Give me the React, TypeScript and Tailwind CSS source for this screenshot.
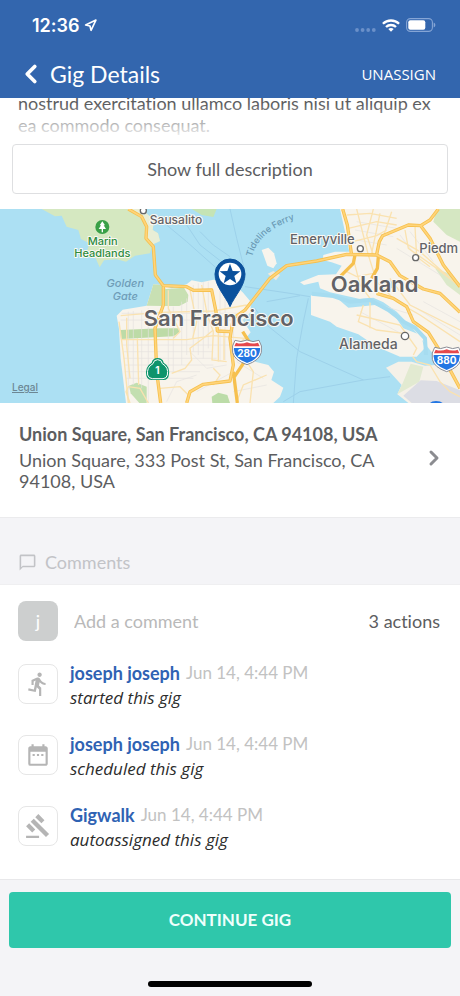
import React from 'react';
import { ChevronLeft, ChevronRight, Navigation } from 'lucide-react';
import { MdChatBubbleOutline, MdDateRange, MdDirectionsRun, MdGavel } from 'react-icons/md';

interface Activity {
  id: number;
  author: string;
  date: string;
  text: string;
  type: 'START' | 'SCHEDULE' | 'ASSIGN';
}

const activities: Activity[] = [
  { id: 1, author: 'joseph joseph', date: 'Jun 14, 4:44 PM', text: 'started this gig', type: 'START' },
  { id: 2, author: 'joseph joseph', date: 'Jun 14, 4:44 PM', text: 'scheduled this gig', type: 'SCHEDULE' },
  { id: 3, author: 'Gigwalk', date: 'Jun 14, 4:44 PM', text: 'autoassigned this gig', type: 'ASSIGN' },
];

const StatusBar: React.FC = () => (
  <div className="flex h-[50px] items-center justify-between pl-8 pr-6">
    <div className="flex items-center gap-1">
      <span className="font-['Inter',sans-serif] text-[18px] font-semibold">12:36</span>
      <Navigation className="h-[13px] w-[13px]" strokeWidth={3} />
    </div>
    <div className="flex items-center gap-1.5">
      <svg className="h-5 w-[21px]" viewBox="0 0 21 20" fill="#6b90c9">
        <circle cx="2" cy="15" r="1.9" />
        <circle cx="7.600" cy="15" r="1.9" />
        <circle cx="13.200" cy="15" r="1.9" />
        <circle cx="18.800" cy="15" r="1.9" />
      </svg>
      <svg className="h-[13px] w-[18px]" viewBox="0 0 18 13" fill="none" stroke="#fff" strokeWidth="2.300">
        <path d="M.9 4.800C5.400.4 12.600.4 17.100 4.800" />
        <path d="M4 8C6.800 5.300 11.200 5.300 14 8" />
        <path d="M9 12.800L6.300 10.100C7.800 8.700 10.200 8.700 11.700 10.100Z" fill="#fff" stroke="none" />
      </svg>
      <svg className="h-[14px] w-[30px]" viewBox="0 0 30 14">
        <rect x=".6" y=".6" width="25.800" height="12.800" rx="3.800" fill="none" stroke="#86a5d5" strokeWidth="1.100" />
        <rect x="2.300" y="2.300" width="17" height="9.400" rx="2" fill="#fff" />
        <path d="M27.700 4.500Q29.400 5.200 29.400 7T27.700 9.500Z" fill="#86a5d5" />
      </svg>
    </div>
  </div>
);

const InterstateShield: React.FC<{ x: number; y: number; label: string }> = ({ x, y, label }) => (
  <g transform={`translate(${x} ${y})`}>
    <path d="M-36-36Q-18-28 0-37Q18-28 36-36Q47-20 43 0Q38 24 0 37Q-38 24-43 0Q-47-20-36-36Z" fill="#fff" stroke="#8a8d96" strokeWidth="3" />
    <path d="M-33-29Q-17-23 0-30Q17-23 33-29L38-18H-38Z" fill="#e5484d" />
    <path d="M-39-13H39Q42 18 0 32Q-42 18-39-13Z" fill="#2276e3" />
    <text y="13" fontSize="30" fontWeight="700" fill="#fff" textAnchor="middle">{label}</text>
  </g>
);

const GigMap: React.FC = () => (
  <svg className="block h-auto w-full font-['Inter',sans-serif]" viewBox="0 12 1380 582" role="img" aria-label="Map of San Francisco">
    <rect y="12" width="1380" height="582" fill="#ace0f3" />

    {/* Marin and Angel Island */}
    <path d="M125 12L165 34L185 32L200 65L235 75L243 102L268 115L262 135L285 155L299 187L312 166L350 163L378 170L405 152L450 145L458 118L480 108L474 85L458 75L462 45L420 12Z" fill="#d5e8c1" />
    <path d="M385 12L430 45L442 100L460 118L480 108L474 85L458 75L462 45L425 12Z" fill="#e9eed6" />
    <path d="M575 12L605 30L640 36L650 12Z" fill="#c5e4b5" />

    {/* San Francisco peninsula */}
    <path d="M350 332L368 314L440 302L460 238L484 240L515 250L560 238L575 226L605 232L640 224L690 228L728 262L752 290L752 322L728 345L752 382L736 402L772 425L765 470L805 480L822 500L814 525L850 548L840 575L820 594H378L362 460L357 372Z" fill="#f8f4ec" />
    <path d="M440 302L460 238L484 240L498 252L552 248L565 270L563 290L538 303H490Z" fill="#c8e0b3" />
    <path d="M360 375L480 370H538V384L520 394L363 402Z" fill="#bddba7" />
    <path d="M387 542L410 533L440 545V594H418L392 565Z" fill="#c2dfb0" />
    <path d="M635 575L655 563L682 570L690 594H637Z" fill="#bcdca8" />

    {/* East Bay */}
    <path d="M1020 12L1048 140L1005 140L970 150L968 165L995 172L1025 182L1008 208L955 210L900 232L912 240L955 230L960 250L990 262L1080 282L1120 278L1150 292L1190 320L1240 372L1270 410L1310 460L1380 520V12Z" fill="#f8f4ec" />
    <path d="M933 270L1010 278L1045 308L1125 300L1175 320L1210 370L1262 390L1274 430L1250 455L1200 455L1130 425L1075 388L1010 365L990 350L933 330Z" fill="#f8f4ec" />
    <path d="M1158 488L1195 470L1235 470L1275 482L1305 480L1330 455L1380 490V594H1225L1192 568L1205 540Z" fill="#f5f1e8" />
    <path d="M1232 476L1270 485L1258 530L1192 568L1208 535Z" fill="#e2ead1" />
    <path d="M1262 526L1310 528L1380 556V594H1235L1210 572Z" fill="#dcdde4" />
    <path d="M1310 12H1380V110L1340 90L1300 50Z" fill="#d5e7c2" />
    <path d="M1305 190L1345 205L1380 235V270L1340 240Z" fill="#dbe9c9" />
    <path d="M1165 228L1182 224V250H1165Z" fill="#a6ddec" />
    <path d="M785 135L805 128L822 145L830 175L820 190L802 182Z" fill="#f8f4ec" />
    <path d="M803 206L820 198L840 210L828 226Z" fill="#eee9dd" />

    {/* Ferry routes */}
    <g fill="none" stroke="#9dd1ea" strokeWidth="3">
      <path d="M500 60L560 110L650 190M560 60L600 120L690 190M600 80L640 120L690 155" />
      <path d="M690 12L710 100L735 200M735 245L870 265L930 275M800 290L900 272" />
      <path d="M765 310L800 360L900 440L1090 525L1170 515M1090 525L900 560L850 590" />
      <path d="M925 280L910 350L890 460L880 594" />
    </g>

    {/* Street grid */}
    <g fill="none" stroke="#e6e3df" strokeWidth="2">
      <path d="M365 325H725M362 345H740M365 420H735M370 440H640M370 460H650M372 480H640M374 500H600M378 520H580" />
      <path d="M385 320V590M400 318V540M425 316V550M445 310V594M505 305V520M520 305V500M545 290V480M560 280V450M580 240V440M595 235V450M610 230V460M625 230V430M660 245V470M675 245V465M700 330V460" />
      <path d="M570 440L620 490L680 480M500 590L530 530L590 510M590 560L700 500M710 470L790 520M700 560L800 540" />
      <path d="M1070 50L1190 70M1065 75L1180 95M1070 105L1160 120M1190 130L1320 210M1200 90L1260 170M1230 80L1300 170M1140 300L1240 330M1080 320L1230 400M1270 290L1380 350M1250 310L1380 390" />
    </g>
    <g fill="none" stroke="#fae2b0" strokeWidth="4">
      <path d="M362 332L480 322L640 318L740 300M364 404H560L640 392L735 400M380 338V420L390 520M412 400L416 540M357 350L372 460L385 594" />
      <path d="M505 256V310L540 380L520 400M570 255L590 350L578 400M605 240L622 330L640 380L636 465L680 470M655 380V470M672 380V465" />
      <path d="M515 505L555 490L575 465L570 430L610 400L640 375M480 550L540 545L565 570M445 594L420 550L385 545L378 560L390 594M640 540L660 510L640 490" />
      <path d="M700 430L735 400M720 440L760 500L750 594M710 590L730 540L800 510" />
      <path d="M1040 30L1110 25L1190 40M1045 70L1130 50L1190 60M1070 12L1105 150M1120 12L1100 90L1120 150M1058 110L1130 92L1160 75M1140 25L1115 145M1175 20L1150 95" />
      <path d="M1215 75L1225 130L1310 190L1380 245M1245 65L1250 155L1290 185M1190 100L1260 140L1350 220M1060 160L1080 240L1110 280L1110 370" />
      <path d="M1105 150L1130 230L1190 290L1260 330L1380 410M1170 220L1230 300L1380 375M1070 330L1200 360L1250 430L1240 450M1090 300L1075 350L1130 375L1210 385M1040 200L1070 215L1120 205" />
      <path d="M1238 455L1250 470L1290 480L1320 530L1350 560L1380 575" />
    </g>

    {/* Oakland estuary */}
    <path d="M935 266L1000 273L1050 290L1110 285L1165 315L1210 350L1245 368L1275 400L1278 450" fill="none" stroke="#a6dcf0" strokeWidth="12" />

    {/* Highways */}
    <g fill="none" stroke="#f6c04e" strokeWidth="10" strokeLinejoin="round">
      <path d="M385 12L425 35L440 65L438 100L460 125L466 210L490 242L560 245L580 256L635 255L648 320L652 378L690 380" />
      <path d="M490 245L490 300L465 370L470 500L482 594" />
      <path d="M560 594L570 560L610 538L690 528L700 480L690 400L700 340L735 315L810 220L860 182L950 168L1040 148L1130 150L1170 170L1200 212L1270 252L1320 265L1380 322" />
      <path d="M1028 12L1042 60L1054 145" />
      <path d="M1130 148L1138 110L1148 92L1225 60L1262 62L1290 45L1315 12M1262 62L1290 100L1330 180L1380 245" />
      <path d="M1065 150L1060 175L1015 220M1135 155L1132 190L1115 220M1130 265L1180 280L1220 305L1240 350L1285 382L1315 430L1380 550" />
      <path d="M700 500L712 594M700 520L760 430L728 380" />
    </g>
    <g fill="none" stroke="#ffd47a" strokeWidth="5" strokeLinejoin="round">
      <path d="M385 12L425 35L440 65L438 100L460 125L466 210L490 242L560 245L580 256L635 255L648 320L652 378L690 380" />
      <path d="M490 245L490 300L465 370L470 500L482 594" />
      <path d="M560 594L570 560L610 538L690 528L700 480L690 400L700 340L735 315L810 220L860 182L950 168L1040 148L1130 150L1170 170L1200 212L1270 252L1320 265L1380 322" />
      <path d="M1028 12L1042 60L1054 145M1130 148L1138 110L1148 92L1225 60L1262 62L1290 45L1315 12M1262 62L1290 100L1330 180L1380 245" />
      <path d="M1130 265L1180 280L1220 305L1240 350L1285 382L1315 430L1380 550" />
    </g>

    {/* Park marker */}
    <circle cx="307" cy="66" r="21" fill="#39a047" />
    <path d="M307 49L315 61H311L318 72H309V82H305V72H296L303 61H299Z" fill="#fff" />

    {/* Place dots */}
    <g fill="#fff" stroke="#676767" strokeWidth="4">
      <circle cx="430" cy="17" r="9" />
      <circle cx="1081" cy="131" r="9" />
      <circle cx="1247" cy="158" r="9" />
      <circle cx="1215" cy="393" r="11" />
    </g>

    {/* Labels */}
    <g fill="#626266" stroke="#fbf9f4" strokeWidth="6" paintOrder="stroke" strokeLinejoin="round" fontWeight="500" textAnchor="middle">
      <text x="528" y="56" fontSize="36">Sausalito</text>
      <text x="967" y="116" fontSize="39">Emeryville</text>
      <text x="1258" y="143" fontSize="39" textAnchor="start">Piedm</text>
      <text x="1105" y="432" fontSize="42">Alameda</text>
      <text x="656" y="364" fontSize="66" fontWeight="600">San Francisco</text>
      <text x="1124" y="260" fontSize="66" fontWeight="600">Oakland</text>
      <g fill="#2f8c41" fontSize="33">
        <text x="308" y="120">Marin</text>
        <text x="307" y="157">Headlands</text>
      </g>
    </g>
    <g fill="#6f9db8" fontSize="33" fontStyle="italic" fontWeight="500" textAnchor="middle">
      <text x="376" y="246">Golden</text>
      <text x="376" y="284">Gate</text>
    </g>
    <path id="ferry" d="M756 156Q776 70 920 32" fill="none" />
    <text fill="#6a9ab5" fontSize="27" fontWeight="500">
      <textPath href="#ferry">Tideline Ferry</textPath>
    </text>

    {/* Route shields */}
    <InterstateShield x={741} y={442} label="280" />
    <InterstateShield x={1340} y={463} label="880" />
    <path d="M473 459Q488 459 491 473Q512 485 506 512Q504 524 491 525H455Q442 524 439 512Q434 485 455 473Q458 459 473 459Z" fill="#0d946b" />
    <path d="M473 464Q485 464 487 476Q507 487 502 510Q500 520 489 521H457Q446 520 443 510Q439 487 459 476Q461 464 473 464Z" fill="none" stroke="#fff" strokeWidth="3" />
    <text x="472" y="508" fontSize="30" fontWeight="700" fill="#fff" textAnchor="middle">1</text>
    <path d="M1290 594Q1295 588 1308 588Q1322 588 1328 594Z" fill="#2276e3" />

    {/* Gig location */}
    <path d="M690 305C676 272 645 244 645 207A45 45 0 0 1 735 207C735 244 704 272 690 305Z" fill="#0b519c" stroke="#0b519c" strokeWidth="3" />
    <circle cx="690" cy="207" r="34" fill="#fff" />
    <path d="M690 176L698 198L721 199L703 213L709 235L690 222L671 235L677 213L659 199L682 198Z" fill="#0b519c" />
  </svg>
);

const ActivityRow: React.FC<{ activity: Activity }> = ({ activity }) => {
  const getIcon = (type: string) => {
    switch (type) {
      case 'START': return <MdDirectionsRun className="h-[26px] w-[26px]" />;
      case 'SCHEDULE': return <MdDateRange className="h-[26px] w-[26px]" />;
      default: return <MdGavel className="h-[26px] w-[26px]" />;
    }
  };

  return (
    <li className="flex gap-3">
      <div className="flex h-10 w-10 shrink-0 items-center justify-center rounded-lg border border-[#e6e6e6] text-[#b5b5b5]">
        {getIcon(activity.type)}
      </div>
      <div>
        <div className="flex h-[18px] items-center gap-1.5 leading-[18px]">
          <span className="text-[18px] font-bold text-[#2f62b3]">{activity.author}</span>
          <span className="text-[17px] text-[#c2c2c2]">{activity.date}</span>
        </div>
        <p className="mt-[5px] font-['Open_Sans',sans-serif] text-[17px] leading-[22px] text-[#2c2c2c] italic">{activity.text}</p>
      </div>
    </li>
  );
};

export default function App() {
  return (
    <div className="flex min-h-screen flex-col bg-[#f4f4f7] font-['Lato',sans-serif] text-[18px] text-[#5c5d60] [font-variant-ligatures:none]">
      <header className="bg-[#3366ae] text-white">
        <StatusBar />
        <div className="flex h-12 items-center justify-between pr-6 pl-4">
          <div className="flex items-center gap-1">
            <button type="button" aria-label="Back">
              <ChevronLeft className="h-[30px] w-[30px]" strokeWidth={3} />
            </button>
            <h1 className="text-[23px]">Gig Details</h1>
          </div>
          <button type="button" className="font-['Open_Sans',sans-serif] text-[15px]">UNASSIGN</button>
        </div>
      </header>

      <main>
        <section className="bg-white">
          <div className="relative flex h-[38px] flex-col justify-end overflow-hidden px-[18px]">
            <p className="leading-[22px]">
              nostrud exercitation ullamco laboris nisi ut aliquip ex ea commodo consequat.
            </p>
            <div className="absolute inset-x-0 bottom-0 h-8 bg-linear-to-b from-white/0 to-white/90" />
          </div>
          <div className="px-3 pt-2 pb-[15px]">
            <button type="button" className="h-[50px] w-full rounded border border-[#dedfe1]">
              Show full description
            </button>
          </div>
          <div className="relative">
            <GigMap />
            <a href="#legal" className="absolute bottom-2 left-3 font-['Inter',sans-serif] text-[10px] font-medium text-[#6c8794] underline">Legal</a>
          </div>
          <a href="#location" className="flex items-center gap-8 border-b border-[#ebebed] pt-5 pr-3.5 pb-[25px] pl-[19px]">
            <div className="flex-1">
              <h2 className="mb-[5px] leading-[22px] font-bold">Union Square, San Francisco, CA 94108, USA</h2>
              <p className="leading-[21px]">Union Square, 333 Post St, San Francisco, CA 94108, USA</p>
            </div>
            <ChevronRight className="h-6 w-6 text-[#8b8c90]" strokeWidth={3} />
          </a>
        </section>

        <div className="flex h-[67px] items-end gap-2 border-b border-[#efeff1] px-[18px] pb-2.5 text-[#c2c3c7]">
          <MdChatBubbleOutline className="mb-0.5 h-[19px] w-[19px]" />
          <h2 className="leading-6">Comments</h2>
        </div>

        <section className="border-b border-[#e8e8ea] bg-white pt-4 pr-5 pb-7 pl-[18px]">
          <div className="mb-[23px] flex items-center">
            <div className="mr-4 flex h-10 w-10 items-center justify-center rounded-lg bg-[#cdcfcf] text-white">j</div>
            <input
              type="text"
              aria-label="Add a comment"
              placeholder="Add a comment"
              className="min-w-0 flex-1 outline-none placeholder:text-[#b9b9b9]"
            />
            <span>3 actions</span>
          </div>
          <ul className="space-y-[26px]">
            {activities.map((a) => (
              <ActivityRow key={a.id} activity={a} />
            ))}
          </ul>
        </section>
      </main>

      <footer className="flex flex-1 flex-col items-center justify-between px-[9px] pt-3 pb-[9px]">
        <button type="button" className="h-14 w-full rounded bg-[#2fc7ab] text-[17px] font-bold text-[#effffc]">
          CONTINUE GIG
        </button>
        <div className="h-1.5 w-[164px] rounded-full bg-black" />
      </footer>
    </div>
  );
}
